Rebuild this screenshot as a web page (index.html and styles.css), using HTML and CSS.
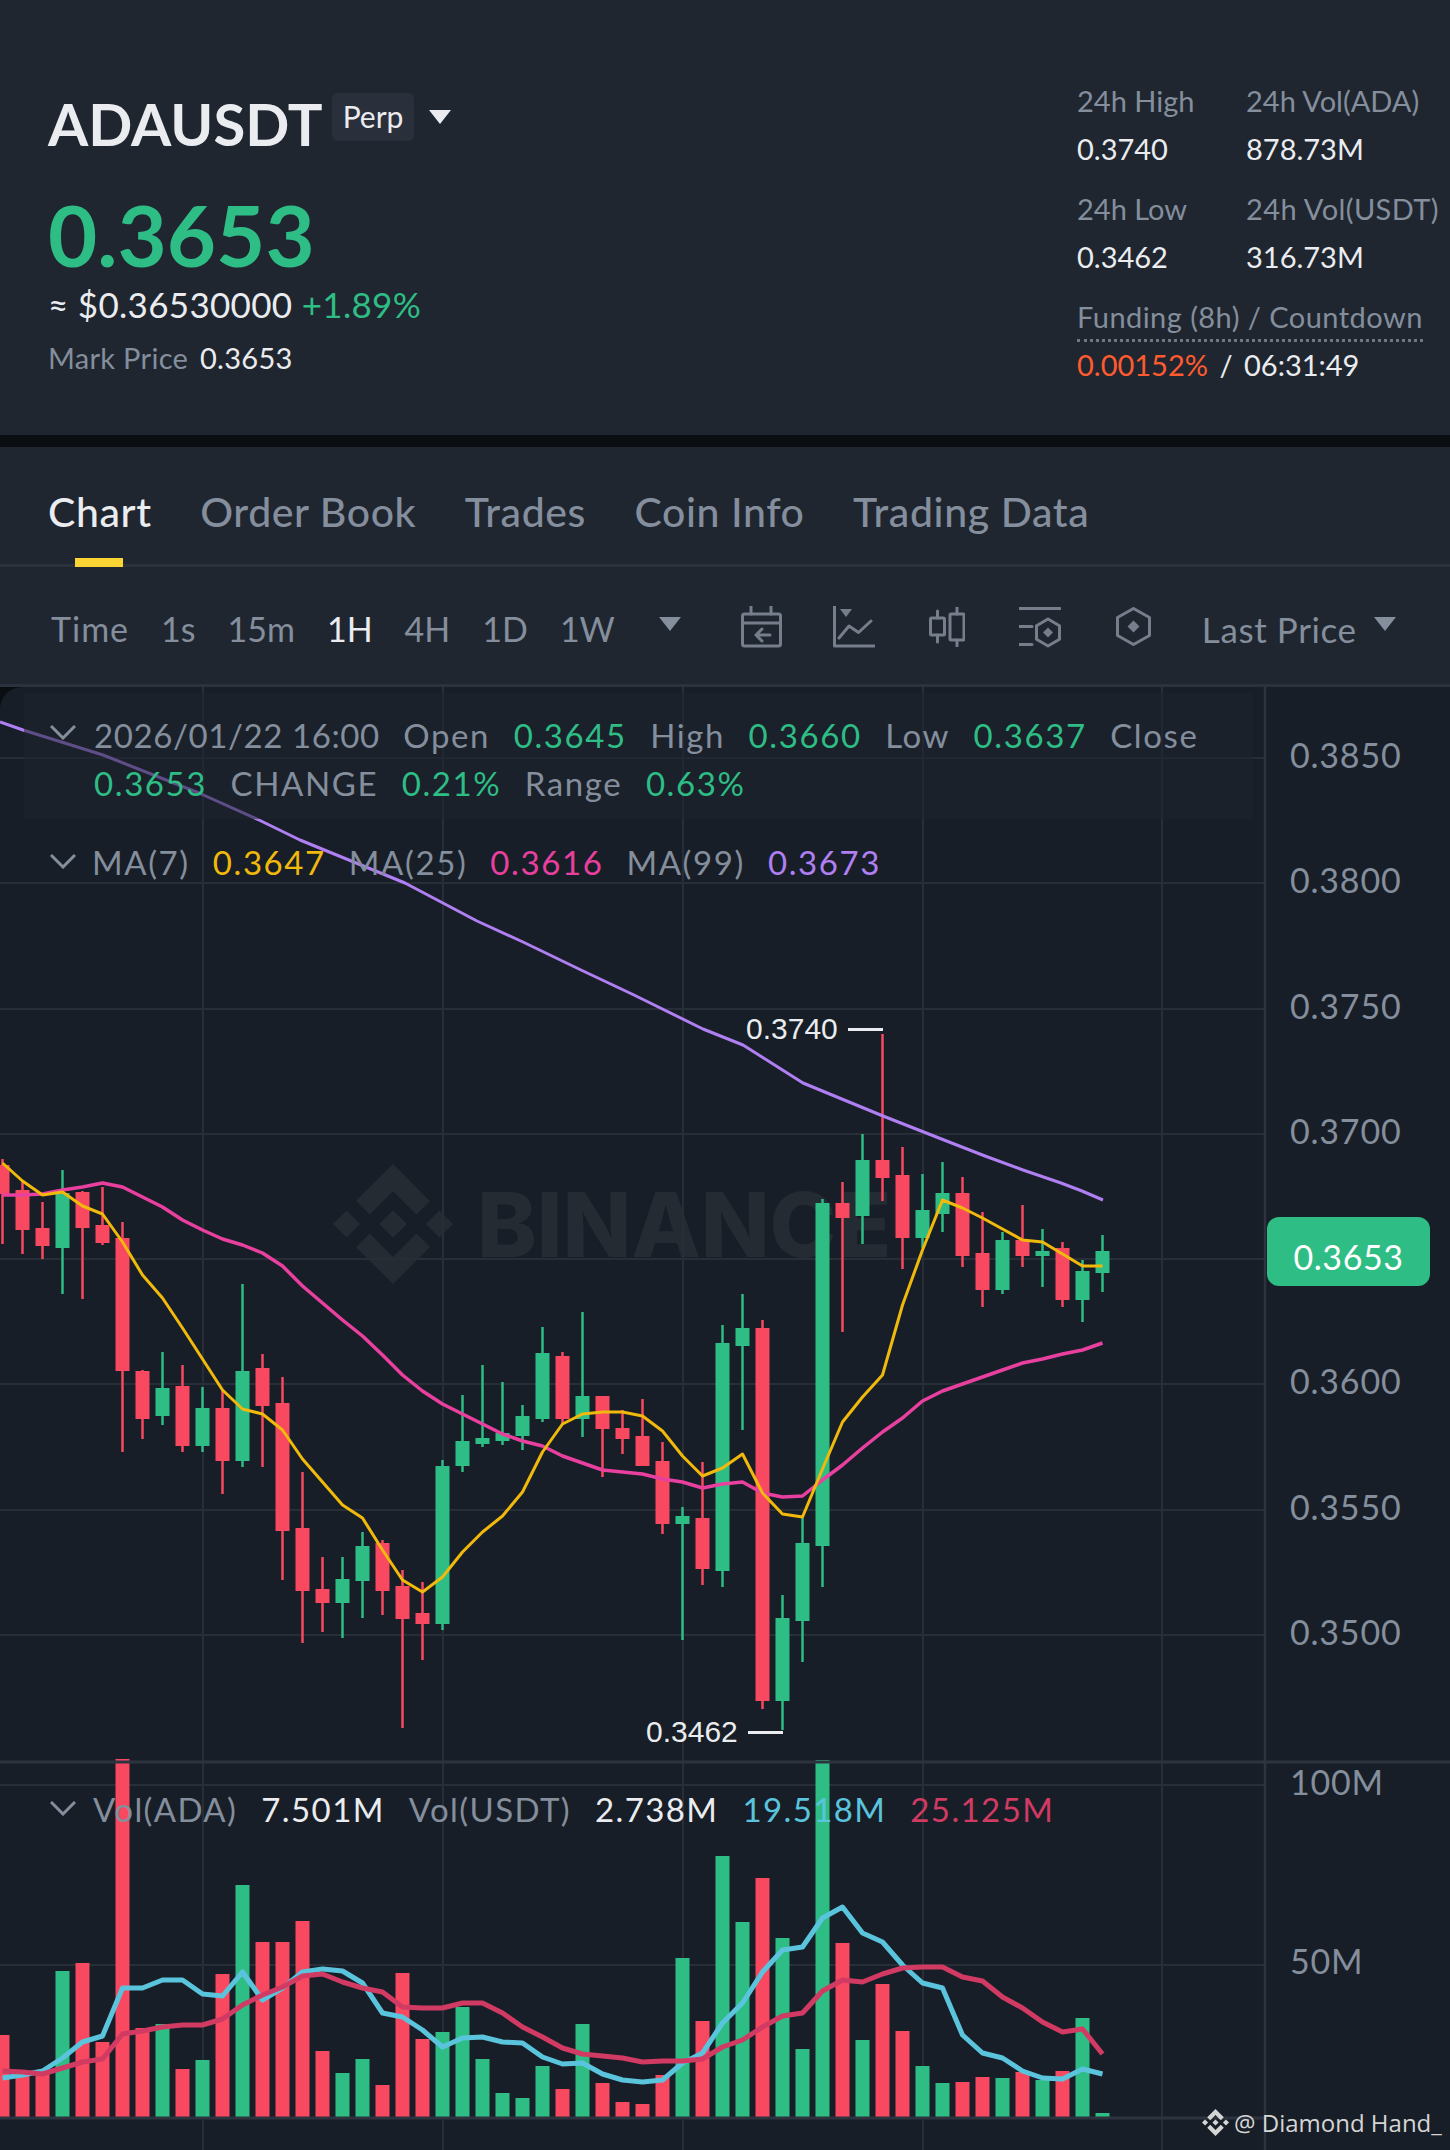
FILE: index.html
```html
<!DOCTYPE html>
<html>
  <head>
    <meta charset="utf-8" />
    <meta name="viewport" content="width=device-width, initial-scale=1.0" />
    <title>ADAUSDT Perp</title>
    <link rel="stylesheet" href="styles.css">
  </head>
  <body>
    <header class="summary">
      <div class="quote">
        <div class="symbol">
          <h1>ADAUSDT</h1>
          <span class="perp">Perp</span>
          <span class="caret caret-light"></span>
        </div>
        <div class="last">0.3653</div>
        <div class="fiat">&asymp; $0.36530000 <span class="up">+1.89%</span></div>
        <div class="mark"><span class="dim">Mark Price</span> 0.3653</div>
      </div>
      <div class="stats">
        <div class="stat"><span class="dim">24h High</span><b>0.3740</b></div>
        <div class="stat"><span class="dim">24h Vol(ADA)</span><b>878.73M</b></div>
        <div class="stat"><span class="dim">24h Low</span><b>0.3462</b></div>
        <div class="stat"><span class="dim wide">24h Vol(USDT)</span><b>316.73M</b></div>
        <div class="stat funding">
          <span class="dim dotted">Funding (8h) / Countdown</span>
          <b><span class="hot">0.00152%</span> <i>/</i> 06:31:49</b>
        </div>
      </div>
    </header>

    <nav class="tabs">
      <a class="active">Chart</a>
      <a>Order Book</a>
      <a>Trades</a>
      <a>Coin Info</a>
      <a>Trading Data</a>
    </nav>

    <div class="toolbar">
      <div class="ranges">
        <span class="time">Time</span>
        <span>1s</span>
        <span>15m</span>
        <span class="on">1H</span>
        <span>4H</span>
        <span>1D</span>
        <span>1W</span>
      </div>
      <span class="caret caret-more"></span>
      <svg class="tool tool-cal" width="42" height="42" viewBox="0 0 42 42">
        <rect x="1.5" y="8" width="38" height="32" rx="2" />
        <path d="M10 0v8M30 0v8M1.5 17h38M29 29H15M21 23l-6 6 6 6" />
      </svg>
      <svg class="tool tool-line" width="42" height="42" viewBox="0 0 42 42">
        <path d="M1.5 0v40H41M6 32l10-12 9.500 6.500L38 15" />
        <path class="solid" d="M7 3h12l-6 8z" />
      </svg>
      <svg class="tool tool-candle" width="36" height="40" viewBox="0 0 36 40">
        <rect x="1.500" y="11" width="14" height="17" rx="1" />
        <rect x="21" y="7" width="14" height="26" rx="1" />
        <path d="M8.500 4v7M8.500 28v7M28 0v7M28 33v6" />
      </svg>
      <svg class="tool tool-list" width="42" height="42" viewBox="0 0 42 42">
        <path d="M0 2.500h41M0 20.500h13M0 38.500h13M29 13l11.500 6.700v13.600L29 40l-11.500-6.700V19.700z" />
        <path class="solid" d="M29 21.500l5 5-5 5-5-5z" />
      </svg>
      <svg class="tool tool-hex" width="36" height="40" viewBox="0 0 36 40">
        <path d="M17.500 1.500l16 9v18l-16 9-16-9v-18z" />
        <path class="solid" d="M17.500 13.500l6 6-6 6-6-6z" />
      </svg>
      <span class="last-price">Last Price</span>
      <span class="caret caret-price"></span>
    </div>

    <section class="chart">
      <div class="watermark">
        <svg width="120" height="120" viewBox="0 0 126.610 126.610">
          <path d="M38.730 53.200l24.590-24.580 24.600 24.600 14.300-14.310L63.320 0 24.410 38.900l14.320 14.300zM0 63.310L14.300 49l14.310 14.310-14.310 14.300zM38.730 73.410l24.590 24.590 24.600-24.600 14.310 14.290-38.900 38.910-38.910-38.880-.02-.02 14.330-14.290zM98 63.310L112.300 49l14.310 14.310-14.310 14.300zM77.830 63.300L63.320 48.780 48.810 63.280l14.510 14.500 14.510-14.470z" />
        </svg>
        <span>BINANCE</span>
      </div>

      <svg id="plot" class="plot" viewBox="0 687 1450 1463"></svg>

      <div class="axis">
        <span>0.3850</span>
        <span>0.3800</span>
        <span>0.3750</span>
        <span>0.3700</span>
        <span></span>
        <span>0.3600</span>
        <span>0.3550</span>
        <span>0.3500</span>
      </div>
      <div class="axis-vol">
        <span>100M</span>
        <span>50M</span>
      </div>

      <div class="ohlc">
        <svg class="chevron" width="26" height="15" viewBox="0 0 26 15"><path d="M1 1l12 12L25 1" /></svg>
        <div class="ohlc-rows">
          <div class="ohlc-row">
            <span class="dim date">2026/01/22 16:00</span>
            <span class="dim">Open</span><span class="up">0.3645</span>
            <span class="dim">High</span><span class="up">0.3660</span>
            <span class="dim">Low</span><span class="up">0.3637</span>
            <span class="dim">Close</span>
          </div>
          <div class="ohlc-row">
            <span class="up">0.3653</span>
            <span class="dim">CHANGE</span><span class="up">0.21%</span>
            <span class="dim">Range</span><span class="up">0.63%</span>
          </div>
        </div>
      </div>

      <div class="legend legend-ma">
        <svg class="chevron" width="26" height="15" viewBox="0 0 26 15"><path d="M1 1l12 12L25 1" /></svg>
        <span class="dim">MA(7)</span><span class="ma7">0.3647</span>
        <span class="dim">MA(25)</span><span class="ma25">0.3616</span>
        <span class="dim">MA(99)</span><span class="ma99">0.3673</span>
      </div>

      <div class="legend legend-vol">
        <svg class="chevron" width="26" height="15" viewBox="0 0 26 15"><path d="M1 1l12 12L25 1" /></svg>
        <span class="dim">Vol(ADA)</span><span class="white">7.501M</span>
        <span class="dim">Vol(USDT)</span><span class="white">2.738M</span>
        <span class="volma-a">19.518M</span>
        <span class="volma-b">25.125M</span>
      </div>

      <div class="extreme extreme-high">0.3740 <i></i></div>
      <div class="extreme extreme-low">0.3462 <i></i></div>
      <div class="price-tag">0.3653</div>

      <div class="credit">
        <svg width="27" height="27" viewBox="0 0 126.610 126.610">
          <path d="M38.730 53.200l24.590-24.580 24.600 24.600 14.300-14.310L63.320 0 24.410 38.900l14.320 14.300zM0 63.310L14.300 49l14.310 14.310-14.310 14.300zM38.730 73.410l24.590 24.590 24.600-24.600 14.310 14.290-38.900 38.910-38.910-38.880-.02-.02 14.330-14.290zM98 63.310L112.300 49l14.310 14.310-14.310 14.300zM77.830 63.300L63.320 48.780 48.810 63.280l14.510 14.500 14.510-14.470z" />
        </svg>
        <span>@ Diamond Hand_</span>
      </div>
    </section>
    <script src="chart.js"></script>
  </body>
</html>
```

FILE: styles.css
```css
html, body {
    margin: 0;
    padding: 0;
    overflow: hidden;
    width: 1450px;
    height: 2150px;
    background: #0b0e11;
    color: #eaecef;
    font-family: 'Lato', 'Noto Sans', sans-serif;
}
.dim {
    color: #848e9c;
}
.up {
    color: #2ebd85;
}
.white {
    color: #eaecef;
}

/* top summary */
.summary {
    display: flex;
    justify-content: space-between;
    height: 435px;
    margin-bottom: 12px;
    background: #1f2630;
    box-sizing: border-box;
    padding: 89px 0 0 48px;
}
.symbol {
    display: flex;
    align-items: flex-start;
    height: 70px;
}
.symbol h1 {
    margin: 0;
    font-size: 58px;
    line-height: 70px;
    font-weight: 700;
}
.perp {
    margin: 4px 0 0 9px;
    padding: 0 11px;
    height: 48px;
    line-height: 46px;
    font-size: 30px;
    background: #2a303b;
    border-radius: 6px;
}
.caret {
    width: 0;
    height: 0;
    border-left: 11px solid transparent;
    border-right: 11px solid transparent;
    border-top: 14px solid #848e9c;
}
.caret-light {
    margin: 21px 0 0 15px;
    border-top-color: #eaecef;
}
.last {
    margin-top: 29px;
    font-size: 85px;
    line-height: 92px;
    font-weight: 700;
    color: #2ebd85;
}
.fiat {
    margin-top: 2px;
    font-size: 35px;
    line-height: 44px;
    letter-spacing: 0.3px;
}
.mark {
    margin-top: 12px;
    font-size: 29px;
    line-height: 40px;
    letter-spacing: 0.3px;
}
.mark .dim {
    margin-right: 4px;
}

.stats {
    display: grid;
    grid-template-columns: 169px 204px;
    grid-auto-rows: 108px;
    margin-top: -6px;
    font-size: 29px;
}
.stat {
    display: flex;
    flex-direction: column;
    gap: 12px;
    white-space: nowrap;
}
.stat span {
    line-height: 36px;
}
.stat b {
    font-weight: 400;
    line-height: 36px;
}
.stat .wide {
    letter-spacing: 0.4px;
}
.funding {
    grid-column: 1 / 3;
    gap: 0;
}
.dotted {
    align-self: flex-start;
    border-bottom: 3px dotted #6f7783;
    padding-bottom: 4px;
    letter-spacing: 0.45px;
}
.funding b {
    margin-top: 5px;
}
.funding i {
    font-style: normal;
    margin: 0 4px;
}
.hot {
    color: #ff5b2e;
}

/* tabs */
.tabs {
    display: flex;
    gap: 48.500px;
    height: 117px;
    padding: 0 0 0 48px;
    background: #1f2630;
    border-bottom: 3px solid #2c323d;
    font-size: 41px;
    font-weight: 500;
    letter-spacing: 0.6px;
    color: #848e9c;
}
.tabs a {
    position: relative;
    line-height: 130px;
}
.tabs .active {
    color: #eaecef;
}
.tabs .active::after {
    content: "";
    position: absolute;
    left: 27px;
    bottom: -3px;
    width: 48px;
    height: 9px;
    background: #fcd535;
}

/* toolbar */
.toolbar {
    display: flex;
    align-items: center;
    height: 117px;
    background: #1f2630;
    border-bottom: 3px solid #2c323d;
    color: #848e9c;
    font-size: 34px;
}
.ranges {
    display: flex;
    gap: 32px;
    margin: 6px 0 0 51px;
}
.ranges .time {
    letter-spacing: 1px;
}
.ranges .on {
    color: #eaecef;
}
.caret-more {
    margin-left: 44px;
    margin-top: -4px;
}
.tool {
    fill: none;
    stroke: #767e8c;
    stroke-width: 3;
    stroke-linecap: round;
    stroke-linejoin: round;
    margin-top: 3px;
}
.tool .solid {
    fill: #767e8c;
    stroke: none;
}
.tool-cal {
    margin-left: 60px;
}
.tool-line {
    margin-left: 50px;
}
.tool-candle {
    margin-left: 54px;
}
.tool-list {
    margin-left: 54px;
}
.tool-hex {
    margin-left: 55px;
}
.last-price {
    margin: 6px 0 0 50px;
    font-size: 35px;
    letter-spacing: 0.6px;
}
.caret-price {
    margin-left: 17px;
    margin-top: -4px;
}

/* chart */
.chart {
    position: relative;
    height: 1463px;
    background: #171e27;
    border-top-left-radius: 22px;
    overflow: hidden;
}
.plot {
    position: absolute;
    left: 0;
    top: 0;
    width: 1450px;
    height: 1463px;
}
.watermark {
    position: absolute;
    left: 333px;
    top: 477px;
    display: flex;
    align-items: center;
    gap: 24px;
    color: #252b33;
    fill: #252b33;
    font-family: 'Inter', sans-serif;
    font-size: 90px;
    font-weight: 800;
}
.axis, .axis-vol {
    position: absolute;
    left: 1290px;
    display: flex;
    flex-direction: column;
    color: #848e9c;
    font-size: 34px;
    letter-spacing: 0.8px;
}
.axis {
    top: 0;
}
.axis span {
    height: 125.300px;
    line-height: 125.300px;
    position: relative;
    top: 5px;
}
.axis-vol {
    top: 1077px;
}
.axis-vol span {
    height: 179px;
    line-height: 36px;
}

.ohlc {
    position: absolute;
    left: 24px;
    top: 6px;
    width: 1229px;
    height: 126px;
    box-sizing: border-box;
    padding: 18px 0 0 26px;
    display: flex;
    background: rgba(30, 37, 48, 0.55);
    font-size: 33px;
    letter-spacing: 1.6px;
}
.chevron {
    flex: none;
    fill: none;
    stroke: #848e9c;
    stroke-width: 3;
    margin-top: 14px;
    margin-right: 18px;
}
.ohlc-row {
    display: flex;
    gap: 23.500px;
    line-height: 48px;
    white-space: nowrap;
}
.ohlc .date {
    letter-spacing: 0.6px;
}
.legend {
    position: absolute;
    left: 50px;
    display: flex;
    align-items: flex-start;
    gap: 23px;
    font-size: 33px;
    letter-spacing: 1.6px;
    line-height: 44px;
}
.legend .chevron {
    margin-right: -7px;
}
.legend-ma {
    top: 153px;
}
.legend-vol {
    top: 1100px;
    gap: 24px;
    letter-spacing: 1.4px;
}
.ma7 {
    color: #f0b90b;
}
.ma25 {
    color: #e9409f;
}
.ma99 {
    color: #b07ff2;
}
.volma-a {
    color: #5bc4dd;
}
.volma-b {
    color: #d13a62;
}

.extreme {
    position: absolute;
    display: flex;
    align-items: center;
    gap: 10px;
    font-family: 'Liberation Sans', sans-serif;
    font-size: 30px;
    line-height: 34px;
    color: #eaecef;
}
.extreme i {
    display: block;
    height: 3px;
    width: 35px;
    background: #eaecef;
}
.extreme-high {
    left: 746px;
    top: 325px;
}
.extreme-low {
    left: 646px;
    top: 1028px;
}
.price-tag {
    position: absolute;
    left: 1267px;
    top: 530px;
    width: 163px;
    height: 69px;
    line-height: 80px;
    text-align: center;
    border-radius: 12px;
    background: #2ebd85;
    color: #fff;
    font-size: 34px;
    letter-spacing: 0.6px;
}
.credit {
    position: absolute;
    left: 1202px;
    top: 1419px;
    display: flex;
    align-items: center;
    gap: 5px;
    color: #d5d5d5;
    fill: #d5d5d5;
    font-family: 'Open Sans', sans-serif;
    font-size: 24px;
    white-space: nowrap;
}
```

FILE: chart.js
```js
const GREEN = '#2ebd85';
const RED = '#f84960';
const GRID = '#282e38';
const RULE = '#2e343f';

// top wick, body top, body bottom, bottom wick, up or down, in page pixels
const candles = [
  [1159, 1165, 1194, 1244, 0], [1181, 1190, 1230, 1254, 0], [1202, 1228, 1246, 1259, 0], [1170, 1193, 1248, 1294, 1],
  [1191, 1192, 1228, 1299, 0], [1187, 1225, 1243, 1245, 0], [1222, 1238, 1371, 1452, 0], [1370, 1371, 1419, 1439, 0],
  [1352, 1388, 1416, 1425, 1], [1365, 1386, 1446, 1452, 0], [1387, 1408, 1446, 1452, 1], [1391, 1408, 1461, 1494, 0],
  [1284, 1371, 1461, 1467, 1], [1354, 1368, 1406, 1467, 0], [1377, 1403, 1531, 1580, 0], [1472, 1528, 1591, 1643, 0],
  [1557, 1589, 1603, 1632, 0], [1557, 1579, 1603, 1638, 1], [1532, 1546, 1581, 1618, 1], [1540, 1543, 1591, 1615, 0],
  [1570, 1586, 1619, 1728, 0], [1582, 1613, 1624, 1660, 0], [1460, 1466, 1624, 1630, 1], [1395, 1441, 1466, 1472, 1],
  [1365, 1438, 1444, 1447, 1], [1382, 1433, 1441, 1445, 1], [1405, 1416, 1436, 1450, 1], [1327, 1353, 1419, 1422, 1],
  [1352, 1356, 1419, 1425, 0], [1312, 1396, 1419, 1437, 1], [1396, 1396, 1429, 1477, 0], [1410, 1428, 1439, 1454, 0],
  [1399, 1436, 1466, 1466, 0], [1442, 1461, 1524, 1534, 0], [1507, 1516, 1524, 1640, 1], [1462, 1518, 1569, 1585, 0],
  [1325, 1343, 1571, 1587, 1], [1294, 1328, 1346, 1430, 1], [1320, 1328, 1701, 1709, 0], [1595, 1618, 1701, 1730, 1],
  [1518, 1543, 1621, 1662, 1], [1199, 1203, 1546, 1587, 1], [1182, 1203, 1218, 1332, 0], [1134, 1160, 1216, 1244, 1],
  [1034, 1160, 1178, 1201, 0], [1147, 1175, 1238, 1269, 0], [1174, 1210, 1238, 1248, 1], [1162, 1193, 1214, 1232, 1],
  [1177, 1193, 1256, 1267, 0], [1212, 1253, 1290, 1307, 0], [1232, 1240, 1290, 1294, 1], [1205, 1240, 1256, 1267, 0],
  [1229, 1251, 1256, 1287, 1], [1242, 1248, 1300, 1307, 0], [1260, 1271, 1300, 1322, 1], [1235, 1251, 1273, 1292, 1]
];

const volumes = [
  2035, 2075, 2073, 1971, 1963, 2042, 1759, 2028, 2024, 2069, 2060, 1974, 1885, 1942,
  1942, 1921, 2051, 2073, 2059, 2085, 1973, 2039, 2032, 2007, 2059, 2093, 2098, 2066,
  2089, 2024, 2083, 2102, 2104, 2075, 1958, 2021, 1856, 1922, 1878, 1938, 2049, 1760,
  1943, 2040, 1984, 2031, 2066, 2083, 2082, 2077, 2078, 2072, 2080, 2071, 2018, 2113
];

const ma7 = [
  1163, 1181, 1195, 1192, 1206, 1214, 1242, 1275, 1298, 1328, 1359, 1390, 1409, 1414,
  1430, 1459, 1482, 1505, 1518, 1550, 1580, 1592, 1577, 1552, 1532, 1516, 1492, 1452,
  1424, 1414, 1412, 1412, 1416, 1431, 1456, 1476, 1468, 1454, 1493, 1514, 1517, 1469,
  1422, 1397, 1375, 1305, 1250, 1200, 1208, 1218, 1229, 1240, 1242, 1254, 1266, 1266
];

const ma25 = [
  1195, 1195, 1194, 1190, 1187, 1183, 1187, 1197, 1207, 1220, 1230, 1239, 1245, 1253,
  1266, 1286, 1303, 1320, 1336, 1355, 1375, 1391, 1404, 1414, 1424, 1434, 1441, 1446,
  1456, 1463, 1470, 1472, 1474, 1479, 1482, 1488, 1484, 1482, 1493, 1497, 1496, 1480,
  1465, 1448, 1432, 1418, 1401, 1391, 1384, 1377, 1370, 1363, 1359, 1354, 1350, 1343
];

// long average is read off as free points, it starts left of the window
const ma99 = [
  [0, 722], [23, 730], [103, 755], [199, 793], [259, 820], [300, 840], [405, 883], [477, 921],
  [523, 942], [581, 970], [634, 995], [703, 1029], [743, 1045], [803, 1083], [883, 1116],
  [944, 1140], [985, 1156], [1023, 1170], [1061, 1183], [1082, 1191], [1103, 1200]
];

const volA = [
  2078, 2075, 2071, 2058, 2042, 2036, 1988, 1988, 1980, 1980, 1994, 1996, 1972, 2000,
  1988, 1972, 1969, 1971, 1983, 2013, 2017, 2030, 2047, 2038, 2037, 2042, 2043, 2057,
  2064, 2063, 2074, 2080, 2082, 2080, 2063, 2053, 2023, 2003, 1972, 1950, 1947, 1918,
  1907, 1933, 1942, 1965, 1983, 1988, 2035, 2053, 2058, 2071, 2078, 2079, 2069, 2074
];

const volB = [
  2071, 2072, 2074, 2068, 2062, 2059, 2034, 2031, 2027, 2025, 2025, 2019, 2005, 1995,
  1987, 1976, 1974, 1982, 1988, 1992, 2007, 2008, 2008, 2003, 2003, 2013, 2027, 2037,
  2048, 2054, 2056, 2058, 2062, 2061, 2061, 2059, 2047, 2040, 2027, 2016, 2013, 1991,
  1980, 1982, 1974, 1968, 1967, 1967, 1977, 1981, 1997, 2008, 2022, 2032, 2029, 2054
];

const plot = document.getElementById('plot');
let out = '';

function line(x1, y1, x2, y2, color, width) {
  out += `<line x1="${x1}" y1="${y1}" x2="${x2}" y2="${y2}" stroke="${color}" stroke-width="${width}"/>`;
}
function bar(x, y, w, h, color) {
  out += `<rect x="${x}" y="${y}" width="${w}" height="${h}" fill="${color}"/>`;
}
function path(points, color, width) {
  const d = points.map(p => p.join(',')).join(' ');
  out += `<polyline points="${d}" fill="none" stroke="${color}" stroke-width="${width}" stroke-linejoin="round"/>`;
}
const cx = i => 2.5 + i * 20;
const series = ys => ys.map((y, i) => [cx(i), y]);

[203, 443, 683, 923, 1162].forEach(x => line(x, 687, x, 2150, GRID, 2));
[758, 883, 1009, 1134, 1259, 1384, 1510, 1635, 1785, 1965].forEach(y => line(0, y, 1265, y, GRID, 2));

volumes.forEach((top, i) => {
  bar(cx(i) - 7, top, 14, 2117 - top, candles[i][4] ? GREEN : RED);
});
candles.forEach((c, i) => {
  const color = c[4] ? GREEN : RED;
  line(cx(i), c[0], cx(i), c[3], color, 2.5);
  bar(cx(i) - 7, c[1], 14, c[2] - c[1], color);
});

line(0, 1762, 1450, 1762, RULE, 3);
line(0, 2118, 1265, 2118, RULE, 3);
line(1265, 687, 1265, 2150, RULE, 2.5);

path(ma99, '#b07ff2', 3);
path(series(ma25), '#e9409f', 3.5);
path(series(ma7), '#f0b90b', 3);
path(series(volA), '#5bc4dd', 5);
path(series(volB), '#d13a62', 5);

plot.innerHTML = out;
```
